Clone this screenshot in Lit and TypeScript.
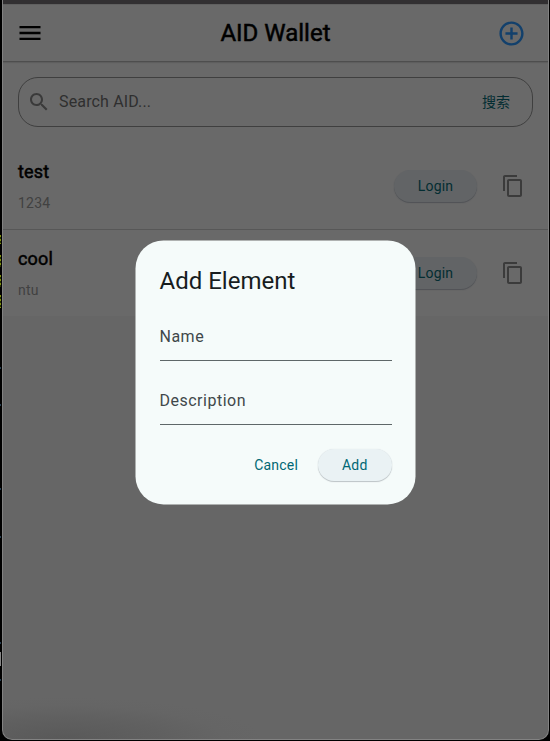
import { LitElement, html, css } from "lit";
import { customElement, property } from "lit/decorators.js";

const paths: Record<string, string> = {
  menu: "M3 18h18v-2H3v2zm0-5h18v-2H3v2zm0-7v2h18V6H3z",
  add: "M13 7h-2v4H7v2h4v4h2v-4h4v-2h-4V7zm-1-5C6.48 2 2 6.48 2 12s4.48 10 10 10 10-4.48 10-10S17.52 2 12 2zm0 18c-4.41 0-8-3.59-8-8s3.59-8 8-8 8 3.59 8 8-3.59 8-8 8z",
  search: "M15.5 14h-.79l-.28-.27C15.41 12.59 16 11.11 16 9.5 16 5.91 13.09 3 9.5 3S3 5.91 3 9.5 5.91 16 9.5 16c1.61 0 3.09-.59 4.23-1.57l.27.28v.79l5 4.99L20.49 19l-4.99-5zm-6 0C7.01 14 5 11.99 5 9.5S7.01 5 9.5 5 14 7.01 14 9.5 11.99 14 9.5 14z",
  copy: "M16 1H4c-1.1 0-2 .9-2 2v14h2V3h12V1zm3 4H8c-1.1 0-2 .9-2 2v14c0 1.1.9 2 2 2h11c1.1 0 2-.9 2-2V7c0-1.1-.9-2-2-2zm0 16H8V7h11v14z",
};

@customElement("md-icon")
class MdIcon extends LitElement {
  @property() name = "menu";
  static styles = css`
    :host { display: block; width: 24px; height: 24px; flex: none; }
    .glyph { display: block; width: 100%; height: 100%; fill: currentColor; }
  `;
  render() {
    return html`<svg class="glyph" viewBox="0 0 24 24"><path d=${paths[this.name]}></path></svg>`;
  }
}

@customElement("aid-row")
class AidRow extends LitElement {
  @property() name = "";
  @property() note = "";
  static styles = css`
    :host { display: flex; align-items: center; height: 86px; padding: 0 23px 0 15px; background: #696969; }
    .texts { flex: 1; padding-top: 2px; }
    .name { font-size: 18px; line-height: 24px; color: #000; letter-spacing: 0.2px; -webkit-text-stroke: 0.5px #000; }
    .note { margin-top: 8px; font-size: 14px; line-height: 22px; letter-spacing: 0.25px; color: #414141; }
    .login { width: 83px; height: 32px; border-radius: 16px; background: #626466; box-shadow: 0 1px 1px #505256; color: #032d32;
      font-size: 14px; line-height: 32px; letter-spacing: 0.2px; text-align: center; }
    .copy { margin-left: 24px; color: #3b3b3b; }
  `;
  render() {
    return html`
      <div class="texts"><div class="name">${this.name}</div><div class="note">${this.note}</div></div>
      <div class="login">Login</div>
      <md-icon class="copy" name="copy"></md-icon>
    `;
  }
}

@customElement("app-root")
class AppRoot extends LitElement {
  static styles = css`
    :host { display: block; position: relative; width: 550px; height: 741px; overflow: hidden; background: #000;
      font-family: Roboto, "Noto Sans CJK SC", sans-serif; box-sizing: border-box; padding: 0 0 1px 2px; }
    * { box-sizing: border-box; }
    .window { height: 740px; width: 547px; border: 1px solid #828282; border-top: 0; border-radius: 0 0 10px 10px; overflow: hidden;
      background: radial-gradient(ellipse 200px 42px at 60px 100%, #595959, #606060 50%, #656565 80%, #666666); }
    .strip { height: 4px; background: #323032; }
    .bar { height: 57px; display: flex; align-items: center; justify-content: space-between; padding: 0 22px 0 13px; background: #696969; border-top: 1px solid #606060; }
    .menu, .add { width: 28px; height: 28px; }
    .menu { color: #000; }
    .add { color: #12406c; width: 29px; height: 29px; }
    .title { margin-left: 10px; font-size: 24px; color: #000; -webkit-text-stroke: 0.5px #000; }
    .panel { background: #696969; height: 82px; padding: 15px 15px 0; border-top: 1px solid #4e4e4e; box-shadow: inset 0 2px 1px -1px #5e5e5e; }
    .search { height: 50px; border: 1px solid #3f3f3f; border-radius: 20px; display: flex; align-items: center; padding: 0 22px 0 8px; color: #3a3a3a; }
    .hint { flex: 1; margin-left: 8px; padding-bottom: 2px; font-size: 16px; letter-spacing: 0.15px; color: #2f2f2f; }
    .go { font-size: 14px; color: #032d32; padding-bottom: 2px; }
    .line { height: 1px; background: #575757; }
    .dialog { position: absolute; left: 135.5px; top: 240px; width: 280px; height: 264px; padding: 24.5px 24px 23.5px 24px;
      display: flex; flex-direction: column; isolation: isolate; }
    .dialog::before { content: ""; position: absolute; z-index: -1; left: 0; top: 0; width: 100%; height: 100%; border-radius: 28px; background: #f5fbfa; transform: translate(-0.5px, 0.4px); }
    .heading { font-size: 24px; line-height: 32px; color: #171d1e; }
    .field { height: 48px; line-height: 47px; margin-top: 16px; font-size: 16px; letter-spacing: 0.5px; color: #3f484a; border-bottom: 1px solid #5e6768; }
    .actions { display: flex; justify-content: flex-end; align-items: center; margin-top: 24px; height: 32px; line-height: 32px; font-size: 14px; letter-spacing: 0.2px; color: #006874; }
    .confirm { width: 73.5px; height: 32px; border-radius: 16px; margin-left: 20px; text-align: center; background: #eaf2f4; box-shadow: 0 1px 1px #bcc3c6, 0 0 1px #d5dbde; }
    .behind { position: absolute; left: 0; top: 0; width: 1px; height: 741px; }
    .mark { position: absolute; left: 0; width: 1px; height: 9px; background: repeating-linear-gradient(#7f9210 0 2px, #263000 2px 4px); }
    .m1 { top: 235px; }
    .m2 { top: 255px; height: 12px; }
    .m3 { top: 275px; height: 12px; }
    .m4 { top: 295px; height: 13px; }
    .m5 { top: 652px; height: 14px; background: #868686; }
    .m6, .m7, .m8, .m9, .m10, .m11 { height: 2px; background: #294052; }
    .m6 { top: 642px; }
    .m7 { top: 679px; }
    .m8 { top: 367px; }
    .m9 { top: 404px; }
    .m10 { top: 488px; }
    .m11 { top: 536px; }
  `;
  render() {
    return html`
      <div class="window">
        <div class="strip"></div>
        <div class="bar">
          <md-icon class="menu" name="menu"></md-icon>
          <div class="title">AID Wallet</div>
          <md-icon class="add" name="add"></md-icon>
        </div>
        <div class="panel">
          <div class="search">
            <md-icon name="search"></md-icon>
            <div class="hint">Search AID...</div>
            <div class="go">搜索</div>
          </div>
        </div>
        <aid-row name="test" note="1234"></aid-row>
        <div class="line"></div>
        <aid-row name="cool" note="ntu"></aid-row>
      </div>
      <div class="dialog">
        <div class="heading">Add Element</div>
        <div class="field">Name</div>
        <div class="field">Description</div>
        <div class="actions"><span>Cancel</span><div class="confirm">Add</div></div>
      </div>
      <div class="behind">
        ${[1, 2, 3, 4, 5, 6, 7, 8, 9, 10, 11].map((n) => html`<div class="mark m${n}"></div>`)}
      </div>
    `;
  }
}
